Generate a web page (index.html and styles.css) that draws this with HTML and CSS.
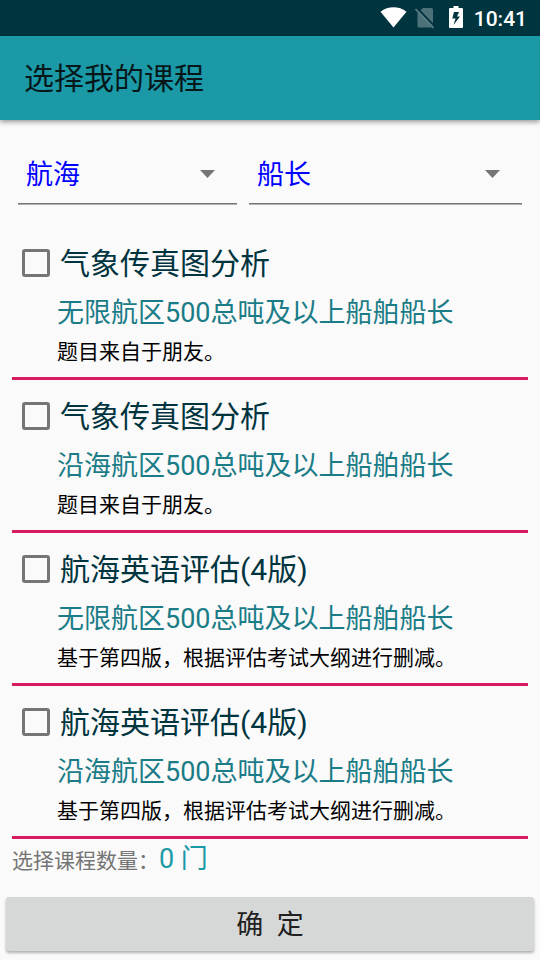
FILE: index.html
```html
<!DOCTYPE html>
<html lang="zh-CN">
<head>
<meta charset="utf-8">
<title>选择我的课程</title>
<link rel="stylesheet" href="styles.css">
</head>
<body>
<div class="status">
  <svg class="wifi" width="27" height="21" viewBox="0 0 27 21"><path d="M13.500 20.500 0.500 4.700C8 -1.100 19 -1.100 26.500 4.700Z" fill="#fff"/></svg>
  <svg class="sim" width="20" height="22" viewBox="0 0 20 22"><path d="M8 1h8.500q1.500 0 1.500 1.500V19q0 1.500-1.500 1.500H4Q2.500 20.500 2.500 19V6Z" fill="#4d7179"/><path d="M2 1 20 19.500" stroke="#00343f" stroke-width="1.800"/><path d="M.5 2 18.500 21" stroke="#5c7c83" stroke-width="1.700"/></svg>
  <svg class="battery" width="14" height="22" viewBox="0 0 14 22"><path d="M4.500 0h5v2H13q1 0 1 1v18q0 1-1 1H1q-1 0-1-1V3q0-1 1-1h3.500Z" fill="#fff"/><path d="M10 6H5L3.300 12.500h3.200L4.500 19 11 10.500H8Z" fill="#00343f"/></svg>
  <span class="clock">10:41</span>
</div>
<header class="appbar"><h1>选择我的课程</h1></header>
<main>
  <div class="spinners">
    <div class="spinner major"><span>航海</span><i class="arrow"></i></div>
    <div class="spinner rank"><span>船长</span><i class="arrow"></i></div>
  </div>
  <div class="list">
    <label class="course"><span class="title"><i class="box"></i><span>气象传真图分析</span></span><span class="sub">无限航区500总吨及以上船舶船长</span><span class="note">题目来自于朋友。</span></label>
    <label class="course"><span class="title"><i class="box"></i><span>气象传真图分析</span></span><span class="sub">沿海航区500总吨及以上船舶船长</span><span class="note">题目来自于朋友。</span></label>
    <label class="course"><span class="title"><i class="box"></i><span>航海英语评估(4版)</span></span><span class="sub">无限航区500总吨及以上船舶船长</span><span class="note">基于第四版，根据评估考试大纲进行删减。</span></label>
    <label class="course"><span class="title"><i class="box"></i><span>航海英语评估(4版)</span></span><span class="sub">沿海航区500总吨及以上船舶船长</span><span class="note">基于第四版，根据评估考试大纲进行删减。</span></label>
  </div>
  <div class="count"><span>选择课程数量：</span><b>0 门</b></div>
</main>
<button class="confirm">确&nbsp; 定</button>
</body>
</html>
```

FILE: styles.css
```css
* { box-sizing: border-box; }
body {
  margin: 0;
  width: 540px;
  height: 960px;
  overflow: hidden;
  background: #fafafa;
  font-family: Roboto, "Noto Sans CJK SC", sans-serif;
}
.status {
  height: 36px;
  background: #00343f;
  display: flex;
  align-items: center;
  justify-content: flex-end;
  padding-right: 13px;
}
.wifi { margin-bottom: 2px; }
.sim { margin-left: 8px; }
.battery { margin: 0 0 2px 14px; }
.clock {
  margin-left: 11px;
  padding-top: 2px;
  color: #fff;
  font-size: 21px;
  font-weight: 500;
}
.appbar {
  height: 84px;
  background: #1b99a6;
  box-shadow: 0 2px 5px rgba(0, 0, 0, .4);
  padding-left: 24px;
}
h1 {
  margin: 0;
  font-size: 30px;
  font-weight: 400;
  line-height: 86px;
  color: #051719;
}
main { padding: 0 12px; }
.spinners {
  display: flex;
  gap: 12px;
  padding: 24px 6px 0;
  height: 117px;
}
.spinner {
  height: 60px;
  border-bottom: 1px solid #757575;
  box-shadow: 0 1px 0 #b0b0b0;
  display: flex;
  justify-content: space-between;
  align-items: center;
  padding: 0 22px 0 8px;
  font-size: 27px;
  line-height: 60px;
  color: #00f;
}
.spinner span { padding-top: 2px; }
.major { width: 219px; }
.rank { width: 273px; }
.arrow {
  width: 15px;
  height: 8px;
  margin-top: 1px;
  background: #757575;
  clip-path: polygon(0 0, 100% 0, 50% 100%);
}
.course {
  display: block;
  height: 153px;
  padding-top: 10px;
  border-bottom: 3px solid #d81b60;
}
.course:first-child { height: 143px; padding-top: 0; }
.title {
  display: flex;
  align-items: center;
  height: 52px;
  font-size: 30px;
  color: #00343f;
}
.title span { padding-bottom: 4px; }
.box {
  width: 28px;
  height: 28px;
  margin: 0 10px;
  border: 3px solid #757575;
  border-radius: 3px;
}
.sub, .note { display: block; padding-left: 45px; white-space: nowrap; }
.sub { height: 46px; line-height: 48px; font-size: 27px; color: #1a7c87; }
.note { height: 34px; line-height: 34px; font-size: 21px; color: #000; }
.count {
  display: flex;
  height: 42px;
  line-height: 44px;
  font-size: 21px;
  color: #757575;
}
.count b { line-height: 40px; font-size: 27px; font-weight: 400; color: #1b99a6; }
.confirm {
  display: block;
  width: 528px;
  height: 54px;
  margin: 16px 6px 0;
  padding: 0 0 4px;
  border: 0;
  border-radius: 3px;
  background: #d6d7d7;
  box-shadow: 0 2px 3px rgba(0, 0, 0, .3);
  font: 27px Roboto, "Noto Sans CJK SC", sans-serif;
  color: #212121;
}
```
